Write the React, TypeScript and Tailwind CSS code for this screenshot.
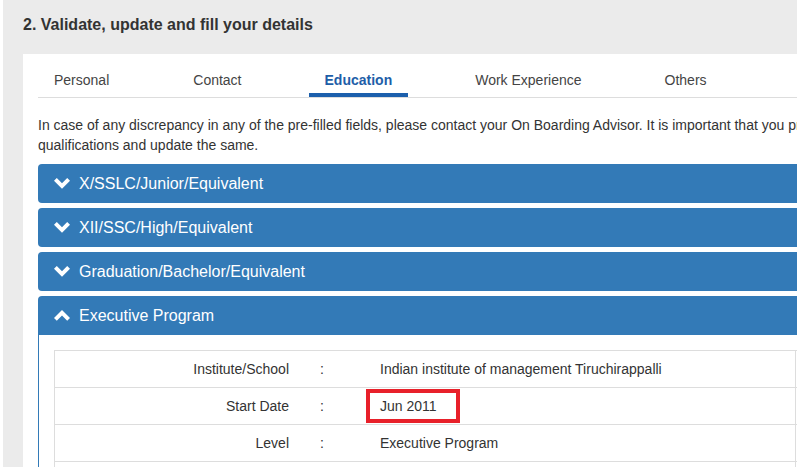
import React from "react";

function ChevronDown() {
  return (
    <svg width="16" height="11" viewBox="0 0 16 11" className="shrink-0">
      <polygon points="0,2.8 2.8,0 8,5.2 13.2,0 16,2.8 8,10.8" fill="#fff" />
    </svg>
  );
}

function ChevronUp() {
  return (
    <svg width="16" height="11" viewBox="0 0 16 11" className="shrink-0">
      <polygon points="0,8 2.8,10.8 8,5.6 13.2,10.8 16,8 8,0" fill="#fff" />
    </svg>
  );
}

function Header({ title, open }: { title: string; open?: boolean }) {
  return (
    <div
      className={
        "h-[39px] bg-[#337ab7] flex items-center pl-[16px] gap-[9px] text-white text-[16px] leading-[20px] " +
        (open ? "rounded-t-[4px]" : "rounded-[4px]")
      }
    >
      {open ? <ChevronUp /> : <ChevronDown />}
      <span>{title}</span>
    </div>
  );
}

function Row({ label, value, boxed }: { label: string; value: string; boxed?: boolean }) {
  return (
    <div className="flex border-t border-l border-[#dddddd] h-[37px]">
      <div className="w-[242px] shrink-0 text-right pr-[8px] flex items-center justify-end">{label}</div>
      <div className="w-[75px] shrink-0 pl-[23px] flex items-center">{label ? ":" : ""}</div>
      <div className="relative w-[424px] shrink-0 pl-[8px] flex items-center border-r border-[#dddddd]">
        {value}
        {boxed && (
          <div className="absolute left-[-6px] top-[1px] w-[94px] h-[34px] border-[4px] border-[#e8202a]" />
        )}
      </div>
      <div className="flex-1" />
    </div>
  );
}

export default function App() {
  const tabs = [
    { name: "Personal", ml: "ml-[1px]" },
    { name: "Contact", ml: "ml-[54px]" },
    { name: "Education", ml: "ml-[52px]", active: true },
    { name: "Work Experience", ml: "ml-[52px]" },
    { name: "Others", ml: "ml-[53px]" },
  ];
  return (
    <div className="w-[797px] h-[467px] overflow-hidden flex bg-white font-['Liberation_Sans',Arial,sans-serif] text-[#333333]">
      <div className="w-[3px] shrink-0 bg-white" />
      <div className="flex-1 min-w-0 bg-[#ebebeb] pl-[20px] pt-[15px] flex flex-col">
        <h2 className="text-[16px] leading-[20px] font-bold text-[#333333]">
          2. Validate, update and fill your details
        </h2>
        <div className="mt-[19px] bg-white w-[1000px] shrink-0 pl-[15px] pr-[15px] flex-1">
          <div className="flex border-b border-[#dddddd]">
            {tabs.map((t) => (
              <div
                key={t.name}
                className={
                  "relative pt-[16px] pb-[7px] text-[14px] leading-[20px] whitespace-nowrap " +
                  t.ml +
                  (t.active ? " px-[16px] font-bold text-[#1e5ea8]" : " px-[15px] text-[#444444]")
                }
              >
                {t.name}
                {t.active && <div className="absolute left-0 right-0 bottom-0 h-[4px] bg-[#1c5fac]" />}
              </div>
            ))}
          </div>
          <div className="mt-[17px] text-[14px] leading-[20px] text-[#333333]">
            <div className="whitespace-nowrap">
              In case of any discrepancy in any of the pre-filled fields, please contact your On Boarding Advisor. It is important that you provide all your educational
            </div>
            <div className="whitespace-nowrap">qualifications and update the same.</div>
          </div>
          <div className="mt-[9px] flex flex-col gap-[5px]">
            <Header title="X/SSLC/Junior/Equivalent" />
            <Header title="XII/SSC/High/Equivalent" />
            <Header title="Graduation/Bachelor/Equivalent" />
            <div>
              <Header title="Executive Program" open />
              <div className="border-l border-r border-[#337ab7] px-[15px] pt-[15px] text-[14px] leading-[20px] text-[#333333]">
                <Row label="Institute/School" value="Indian institute of management Tiruchirappalli" />
                <Row label="Start Date" value="Jun 2011" boxed />
                <Row label="Level" value="Executive Program" />
                <Row label="" value="" />
              </div>
            </div>
          </div>
        </div>
      </div>
    </div>
  );
}
